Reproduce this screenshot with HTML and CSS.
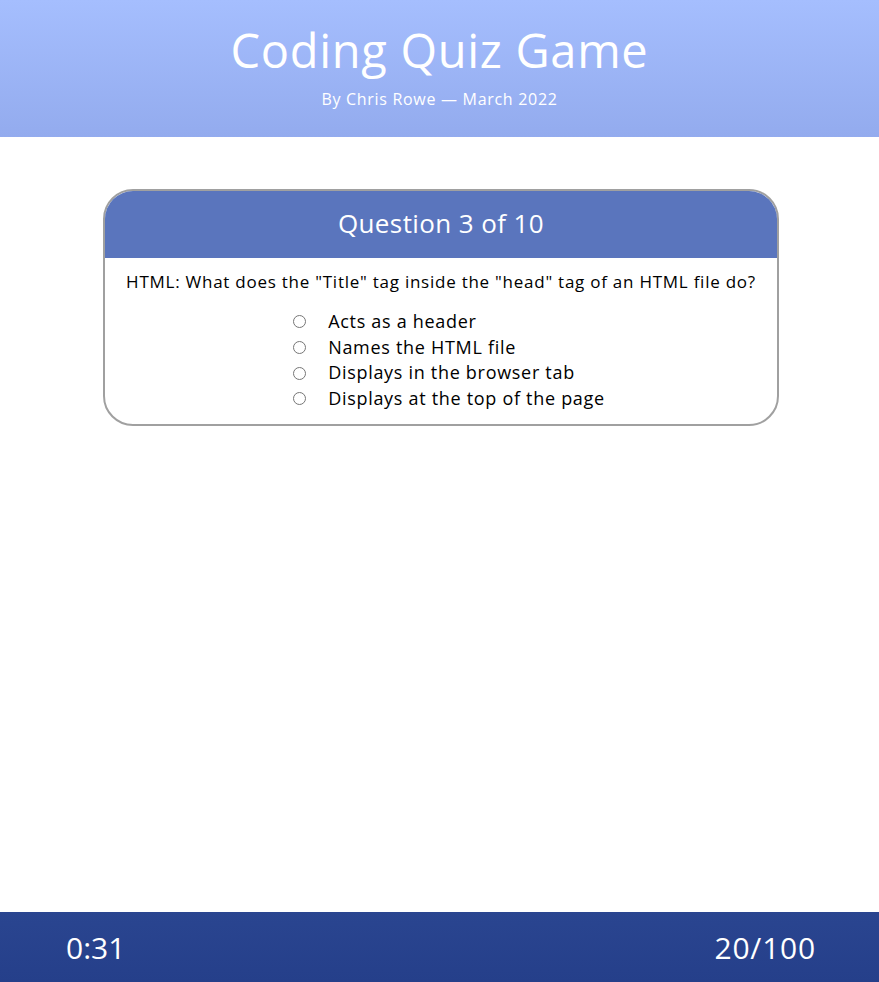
FILE: index.html
```html
<!DOCTYPE html>
<html lang="en">
<head>
<meta charset="utf-8">
<title>Coding Quiz Game</title>
<link rel="stylesheet" href="styles.css">
</head>
<body>
<header class="site-header">
  <h1 class="site-title">Coding Quiz Game</h1>
  <p class="site-byline">By Chris Rowe — March 2022</p>
</header>
<main class="main">
  <section class="card">
    <h2 class="card-head">Question 3 of 10</h2>
    <div class="card-body">
      <p class="question">HTML: What does the "Title" tag inside the "head" tag of an HTML file do?</p>
      <div class="options">
        <label class="option"><input type="radio" name="q"><span>Acts as a header</span></label>
        <label class="option"><input type="radio" name="q"><span>Names the HTML file</span></label>
        <label class="option"><input type="radio" name="q"><span>Displays in the browser tab</span></label>
        <label class="option"><input type="radio" name="q"><span>Displays at the top of the page</span></label>
      </div>
    </div>
  </section>
</main>
<footer class="site-footer">
  <span class="timer">0:31</span>
  <span class="score">20/100</span>
</footer>
</body>
</html>
```
FILE: styles.css
```css
html, body {
  margin: 0;
  padding: 0;
}
body {
  font-family: "Open Sans", "DejaVu Sans", sans-serif;
  min-height: 100vh;
  display: flex;
  flex-direction: column;
  background: #ffffff;
  color: #000;
}
.site-header {
  height: 137px;
  box-sizing: border-box;
  background: linear-gradient(180deg, #a5befe 0%, #93abee 100%);
  color: #fff;
  text-align: center;
  padding-top: 21px;
}
.site-title {
  margin: 0;
  font-weight: 400;
  font-size: 47px;
  line-height: 58px;
  letter-spacing: 0.7px;
}
.site-byline {
  margin: 10px 0 0;
  font-size: 16px;
  line-height: 20px;
  letter-spacing: 0.7px;
}
.main {
  flex: 1;
  padding-top: 52px;
  display: flex;
  justify-content: center;
}
.card {
  width: 676px;
  height: 237px;
  box-sizing: border-box;
  border: 2px solid #a0a0a0;
  border-radius: 30px;
  overflow: hidden;
  margin-left: 3px;
}
.card-head {
  margin: 0;
  height: 67px;
  box-sizing: border-box;
  padding-bottom: 4px;
  background: #5a75bd;
  color: #fff;
  font-weight: 400;
  font-size: 26px;
  letter-spacing: 0.4px;
  display: flex;
  align-items: center;
  justify-content: center;
}
.card-body {
  padding: 12px 10px 10px;
  display: flex;
  flex-direction: column;
  align-items: center;
}
.question {
  margin: 0 0 15px;
  font-size: 17px;
  line-height: 24px;
  letter-spacing: 0.75px;
}
.options {
  display: flex;
  flex-direction: column;
  padding-left: 16px;
}
.option {
  display: flex;
  align-items: center;
  font-size: 18px;
  line-height: 25.7px;
  letter-spacing: 0.7px;
}
.option input {
  margin: 0 22px 0 0;
  width: 13px;
  height: 13px;
}
.site-footer {
  height: 70px;
  background: linear-gradient(180deg, #2a4590 0%, #253f8a 100%);
  color: #fff;
  display: flex;
  align-items: center;
  justify-content: space-between;
  padding: 0 63px 0 66px;
  font-size: 30px;
}
.score {
  letter-spacing: 0.8px;
}
```
